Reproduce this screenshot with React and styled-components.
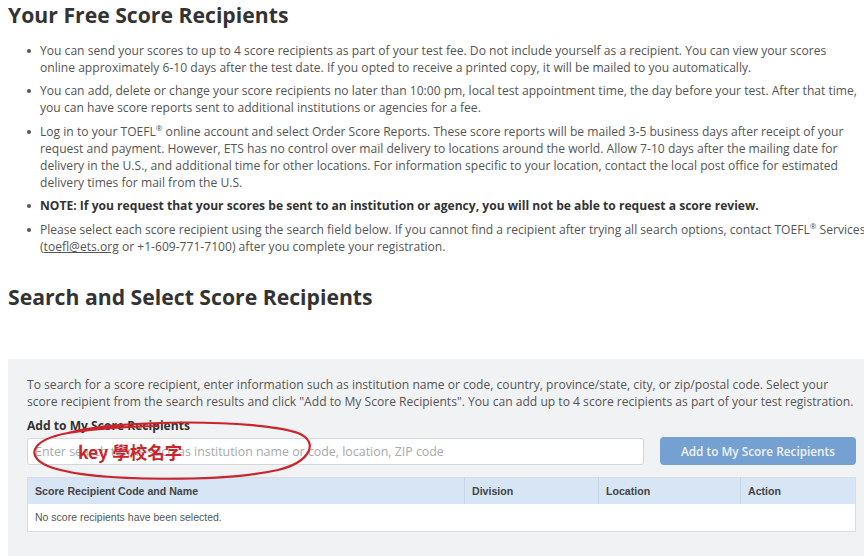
import styled, { createGlobalStyle } from "styled-components";

const GlobalStyle = createGlobalStyle`
  html, body {
    margin: 0;
    padding: 0;
    background: #ffffff;
  }
  body {
    font-family: "Open Sans", "Noto Sans", sans-serif;
    color: #555555;
    overflow: hidden;
  }
`;

const Page = styled.div`
  width: 864px;
  height: 556px;
  overflow: hidden;
  padding: 0 0 0 8px;
  box-sizing: border-box;
`;

const H2 = styled.h2`
  margin: 0;
  padding-top: ${(p) => p.$top || 0}px;
  font-family: "Open Sans", sans-serif;
  font-size: 21.2px;
  line-height: 30px;
  font-weight: 700;
  color: #333333;
`;

const Bullets = styled.ul`
  margin: 12px 0 0 0;
  padding: 0 0 0 32px;
  width: 830px;
  list-style: none;
`;

const Item = styled.li`
  position: relative;
  font-size: 12.1px;
  line-height: 17px;
  color: #555555;
  margin-bottom: ${(p) => p.$gap || 6}px;
  white-space: nowrap;
  font-weight: ${(p) => (p.$bold ? 700 : 400)};
  ${(p) => p.$bold && "color: #333333;"}

  &::before {
    content: "";
    position: absolute;
    left: -13px;
    top: 7px;
    width: 4px;
    height: 4px;
    border-radius: 50%;
    background: #555555;
  }
`;

const Sup = styled.sup`
  font-size: 8px;
  line-height: 0;
`;

const Mail = styled.a`
  color: #555555;
  text-decoration: underline;
`;

const Panel = styled.div`
  margin-top: 47px;
  margin-right: -20px;
  background: #f1f2f4;
  padding: 17px 0 24px 19px;
  position: relative;
`;

const Intro = styled.p`
  margin: 0;
  font-size: 12.1px;
  line-height: 17px;
  color: #555555;
  white-space: nowrap;
`;

const Label = styled.div`
  margin-top: 7px;
  font-size: 12.1px;
  line-height: 17px;
  font-weight: 700;
  color: #333333;
`;

const SearchRow = styled.div`
  display: flex;
  align-items: center;
  gap: 16px;
  margin-top: 3px;
  width: 829px;
`;

const Input = styled.input`
  width: 617px;
  height: 27px;
  box-sizing: border-box;
  border: 1px solid #d4d6da;
  border-radius: 3px;
  background: #ffffff;
  padding: 0 7px;
  font-family: "Open Sans", sans-serif;
  font-size: 12.4px;
  color: #555555;
  outline: none;

  &::placeholder {
    color: #a7a9ac;
  }
`;

const Button = styled.button`
  width: 196px;
  height: 28px;
  border: none;
  border-radius: 4px;
  background: #74a0d2;
  color: #eef3fa;
  font-family: "Open Sans", sans-serif;
  font-size: 11.8px;
  font-weight: 600;
  padding: 0;
`;

const Table = styled.table`
  margin-top: 12px;
  width: 829px;
  border-collapse: collapse;
  font-family: "Liberation Sans", Arial, sans-serif;
  background: #ffffff;
  border: 1px solid #d7dde5;
`;

const Th = styled.th`
  background: #d7e5f4;
  color: #444444;
  font-size: 10.6px;
  font-weight: 700;
  text-align: left;
  height: 26px;
  padding: 0 7px;
  box-sizing: border-box;
  width: ${(p) => p.$w}px;
  border-left: 1px solid #c7d6e8;

  &:first-child {
    border-left: none;
  }
`;

const Td = styled.td`
  height: 27px;
  padding: 0 7px;
  font-size: 10.5px;
  color: #555555;
`;

const Annotation = styled.svg`
  position: absolute;
  left: 0;
  top: 0;
  pointer-events: none;
  overflow: visible;
`;

const Note = styled.span`
  position: absolute;
  left: 70px;
  top: 83px;
  font-family: "Noto Sans CJK TC", "Noto Sans", sans-serif;
  font-size: 17.5px;
  font-weight: 700;
  line-height: 20px;
  color: #c9252b;
`;

export default function App() {
  return (
    <Page>
      <GlobalStyle />
      <H2 $top={0}>Your Free Score Recipients</H2>
      <Bullets>
        <Item>
          You can send your scores to up to 4 score recipients as part of your test fee. Do not include yourself as a recipient. You can view your scores
          <br />
          online approximately 6-10 days after the test date. If you opted to receive a printed copy, it will be mailed to you automatically.
        </Item>
        <Item $gap={7}>
          You can add, delete or change your score recipients no later than 10:00 pm, local test appointment time, the day before your test. After that time,
          <br />
          you can have score reports sent to additional institutions or agencies for a fee.
        </Item>
        <Item>
          Log in to your TOEFL<Sup>®</Sup> online account and select Order Score Reports. These score reports will be mailed 3-5 business days after receipt of your
          <br />
          request and payment. However, ETS has no control over mail delivery to locations around the world. Allow 7-10 days after the mailing date for
          <br />
          delivery in the U.S., and additional time for other locations. For information specific to your location, contact the local post office for estimated
          <br />
          delivery times for mail from the U.S.
        </Item>
        <Item $bold $gap={7}>
          NOTE: If you request that your scores be sent to an institution or agency, you will not be able to request a score review.
        </Item>
        <Item>
          Please select each score recipient using the search field below. If you cannot find a recipient after trying all search options, contact TOEFL<Sup>®</Sup> Services
          <br />
          (<Mail>toefl@ets.org</Mail> or +1-609-771-7100) after you complete your registration.
        </Item>
      </Bullets>

      <H2 $top={21}>Search and Select Score Recipients</H2>

      <Panel>
        <Intro>
          To search for a score recipient, enter information such as institution name or code, country, province/state, city, or zip/postal code. Select your
          <br />
          score recipient from the search results and click "Add to My Score Recipients". You can add up to 4 score recipients as part of your test registration.
        </Intro>
        <Label>Add to My Score Recipients</Label>
        <SearchRow>
          <Input placeholder="Enter search terms such as institution name or code, location, ZIP code" />
          <Button>Add to My Score Recipients</Button>
        </SearchRow>
        <Table>
          <thead>
            <tr>
              <Th $w={437}>Score Recipient Code and Name</Th>
              <Th $w={134}>Division</Th>
              <Th $w={142}>Location</Th>
              <Th>Action</Th>
            </tr>
          </thead>
          <tbody>
            <tr>
              <Td colSpan={4}>No score recipients have been selected.</Td>
            </tr>
          </tbody>
        </Table>

        <Annotation width="320" height="140">
          <path
            d="M60 74 C 110 60, 250 60, 290 74 C 312 83, 302 103, 270 111 C 215 123, 90 123, 45 109 C 15 99, 22 81, 60 74 C 90 69, 130 67, 150 67"
            fill="none"
            stroke="#c9252b"
            strokeWidth="2.2"
            strokeLinecap="round"
          />
        </Annotation>
        <Note>key 學校名字</Note>
      </Panel>
    </Page>
  );
}
